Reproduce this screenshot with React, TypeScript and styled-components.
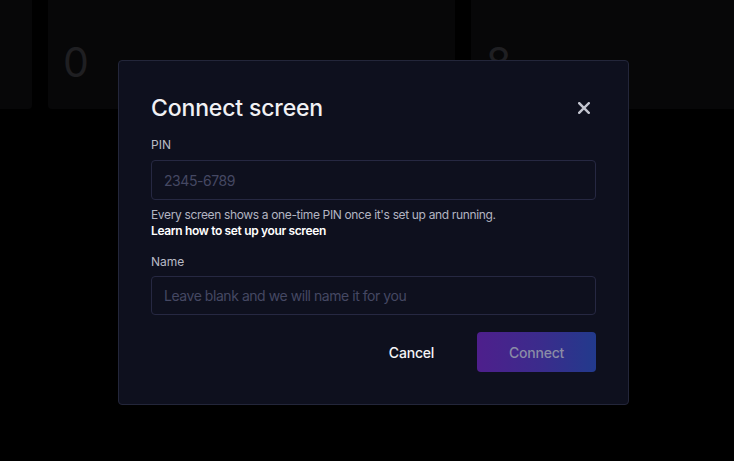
import styled, { createGlobalStyle } from "styled-components";

const GlobalStyle = createGlobalStyle`
  html, body {
    margin: 0;
    padding: 0;
    background: #000;
    overflow: hidden;
  }
  body {
    font-family: Inter, "Liberation Sans", sans-serif;
    -webkit-font-smoothing: antialiased;
  }
`;

const Page = styled.div`
  position: relative;
  width: 734px;
  height: 461px;
  overflow: hidden;
  background: #000;
`;

const CardRow = styled.div`
  display: grid;
  grid-template-columns: repeat(3, 407px);
  gap: 16px;
  margin-left: -375px;
`;

const StatCard = styled.div`
  height: 109px;
  background: #070708;
  border-radius: 0 0 4px 4px;
  box-sizing: border-box;
  padding: 42px 15px 0;
  color: #1f1f22;
  font-size: 41px;
  line-height: 40px;
`;

const Overlay = styled.div`
  position: absolute;
  inset: 0;
  display: flex;
  justify-content: center;
  padding: 60px 0 0 13px;
`;

const Dialog = styled.div`
  width: 511px;
  height: 345px;
  box-sizing: border-box;
  padding: 32px 32px 32px 32px;
  background: #0e101e;
  border: 1px solid #23263a;
  border-radius: 4px;
  display: flex;
  flex-direction: column;
`;

const Header = styled.div`
  display: flex;
  align-items: center;
  justify-content: space-between;
  height: 30px;
`;

const Title = styled.h2`
  margin: 0;
  font-size: 23px;
  font-weight: 500;
  color: #f1f1f4;
  letter-spacing: -0.15px;
`;

const CloseButton = styled.button`
  border: 0;
  background: none;
  padding: 0;
  margin-right: 5px;
  width: 14px;
  height: 14px;
  display: flex;
  align-items: center;
  justify-content: center;
  cursor: pointer;
`;

const Label = styled.label`
  display: block;
  margin-top: 15px;
  font-size: 12px;
  line-height: 16px;
  color: #b9bbc6;
`;

const Input = styled.input<{ tight?: boolean }>`
  display: block;
  width: 100%;
  height: 40px;
  box-sizing: border-box;
  margin-top: ${p => (p.tight ? 6 : 7)}px;
  padding: 0 12px;
  background: transparent;
  border: 1px solid #262842;
  border-radius: 4px;
  font-family: inherit;
  font-size: 14px;
  letter-spacing: -0.45px;
  color: #e8e8ee;
  outline: none;

  &::placeholder {
    color: #454863;
  }
`;

const Hint = styled.p`
  margin: 7px 0 0;
  font-size: 12px;
  line-height: 16px;
  letter-spacing: -0.35px;
  color: #b3b5c2;
`;

const HintLink = styled.a`
  display: block;
  font-weight: 600;
  color: #fff;
  text-decoration: none;
`;

const Actions = styled.div`
  display: flex;
  justify-content: flex-end;
  gap: 6px;
  margin-top: 17px;
`;

const Button = styled.button<{ primary?: boolean }>`
  width: 119px;
  height: 40px;
  border: 0;
  border-radius: 4px;
  font-family: inherit;
  font-size: 14px;
  font-weight: 500;
  letter-spacing: -0.2px;
  cursor: pointer;
  color: ${p => (p.primary ? "#8a8ca6" : "#f4f4f7")};
  background: ${p =>
    p.primary ? "linear-gradient(90deg, #4e1f8c 0%, #3a2c8c 55%, #223a8c 100%)" : "transparent"};
`;

function CloseIcon() {
  return (
    <svg width="12" height="12" viewBox="0 0 12 12" fill="none">
      <path d="M1.2 1.2 L10.8 10.8 M10.8 1.2 L1.2 10.8" stroke="#c3c5d0" strokeWidth="2.4" strokeLinecap="square" />
    </svg>
  );
}

export default function App() {
  return (
    <Page>
      <GlobalStyle />
      <CardRow>
        <StatCard />
        <StatCard>0</StatCard>
        <StatCard>8</StatCard>
      </CardRow>
      <Overlay>
        <Dialog>
          <Header>
            <Title>Connect screen</Title>
            <CloseButton aria-label="Close">
              <CloseIcon />
            </CloseButton>
          </Header>
          <Label>PIN</Label>
          <Input placeholder="2345-6789" />
          <Hint>
            Every screen shows a one-time PIN once it's set up and running.
            <HintLink href="#">Learn how to set up your screen</HintLink>
          </Hint>
          <Label>Name</Label>
          <Input tight placeholder="Leave blank and we will name it for you" />
          <Actions>
            <Button>Cancel</Button>
            <Button primary>Connect</Button>
          </Actions>
        </Dialog>
      </Overlay>
    </Page>
  );
}
